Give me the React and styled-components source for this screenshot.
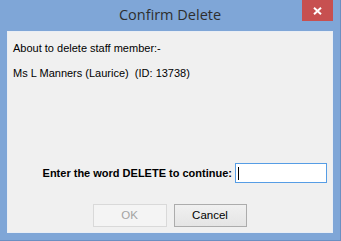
import React from "react";
import styled, { createGlobalStyle } from "styled-components";

const GlobalStyle = createGlobalStyle`
  html, body {
    margin: 0;
    padding: 0;
    overflow: hidden;
    background: #7fa6d7;
  }
`;

const Window = styled.div`
  width: 341px;
  height: 241px;
  box-sizing: border-box;
  display: flex;
  flex-direction: column;
  background: #7fa6d7;
  border-right: 1px solid #6b8fc2;
  border-bottom: 1px solid #6b8fc2;
  padding: 0 7px 7px 7px;
  font-family: "Liberation Sans", Arial, sans-serif;
`;

const TitleBar = styled.div`
  height: 31px;
  flex-shrink: 0;
  display: grid;
  grid-template-columns: 1fr auto 1fr;
  align-items: start;
  margin-left: -7px;
  padding-left: 7px;
`;

const Title = styled.div`
  grid-column: 2;
  font-family: "Open Sans", "Noto Sans", sans-serif;
  font-size: 14.5px;
  line-height: 20px;
  margin-top: 5px;
  color: #2e2e2e;
  white-space: nowrap;
`;

const CloseButton = styled.div`
  grid-column: 3;
  justify-self: end;
  width: 31px;
  height: 21px;
  background: #c75050;
  display: flex;
  align-items: center;
  justify-content: center;
`;

const Content = styled.div`
  flex: 1;
  display: flex;
  flex-direction: column;
  background: #f0f0f0;
  border: 1px solid #e9eef5;
  padding: 10px 5px 5px 5px;
  font-size: 11px;
  line-height: 13px;
  color: #000;
`;

const Message = styled.div`
  white-space: pre;
  margin-bottom: ${(p) => p.gap || 0}px;
`;

const PromptRow = styled.div`
  margin-top: auto;
  display: flex;
  align-items: center;
  justify-content: flex-end;
  gap: 3px;
`;

const PromptLabel = styled.div`
  font-weight: bold;
  white-space: nowrap;
`;

const TextBox = styled.div`
  width: 92px;
  height: 20px;
  box-sizing: border-box;
  background: #fff;
  border: 1px solid #569de5;
  display: flex;
  align-items: center;
  padding-left: 2px;
`;

const Caret = styled.span`
  width: 1px;
  height: 13px;
  background: #000;
`;

const ButtonRow = styled.div`
  margin-top: 21px;
  display: flex;
  justify-content: center;
  gap: 7px;
  padding-right: 1px;
`;

const Button = styled.div`
  width: ${(p) => p.w}px;
  height: 23px;
  box-sizing: border-box;
  display: flex;
  align-items: center;
  justify-content: center;
  font-size: 11.5px;
  border: 1px solid ${(p) => (p.disabled ? "#d9d9d9" : "#acacac")};
  background: ${(p) =>
    p.disabled ? "#f4f4f4" : "linear-gradient(#f0f0f0, #e5e5e5)"};
  color: ${(p) => (p.disabled ? "#a3a3a3" : "#000")};
`;

export default function App() {
  return (
    <>
      <GlobalStyle />
      <Window>
        <TitleBar>
          <Title>Confirm Delete</Title>
          <CloseButton>
            <svg width="9" height="8" viewBox="0 0 9 8">
              <path
                d="M1 0.8 L8 7.2 M8 0.8 L1 7.2"
                stroke="#fff"
                strokeWidth="2"
                fill="none"
              />
            </svg>
          </CloseButton>
        </TitleBar>
        <Content>
          <Message gap={12}>About to delete staff member:-</Message>
          <Message>{"Ms L Manners (Laurice)  (ID: 13738)"}</Message>
          <PromptRow>
            <PromptLabel>Enter the word DELETE to continue:</PromptLabel>
            <TextBox>
              <Caret />
            </TextBox>
          </PromptRow>
          <ButtonRow>
            <Button w={74} disabled>
              OK
            </Button>
            <Button w={73}>Cancel</Button>
          </ButtonRow>
        </Content>
      </Window>
    </>
  );
}
